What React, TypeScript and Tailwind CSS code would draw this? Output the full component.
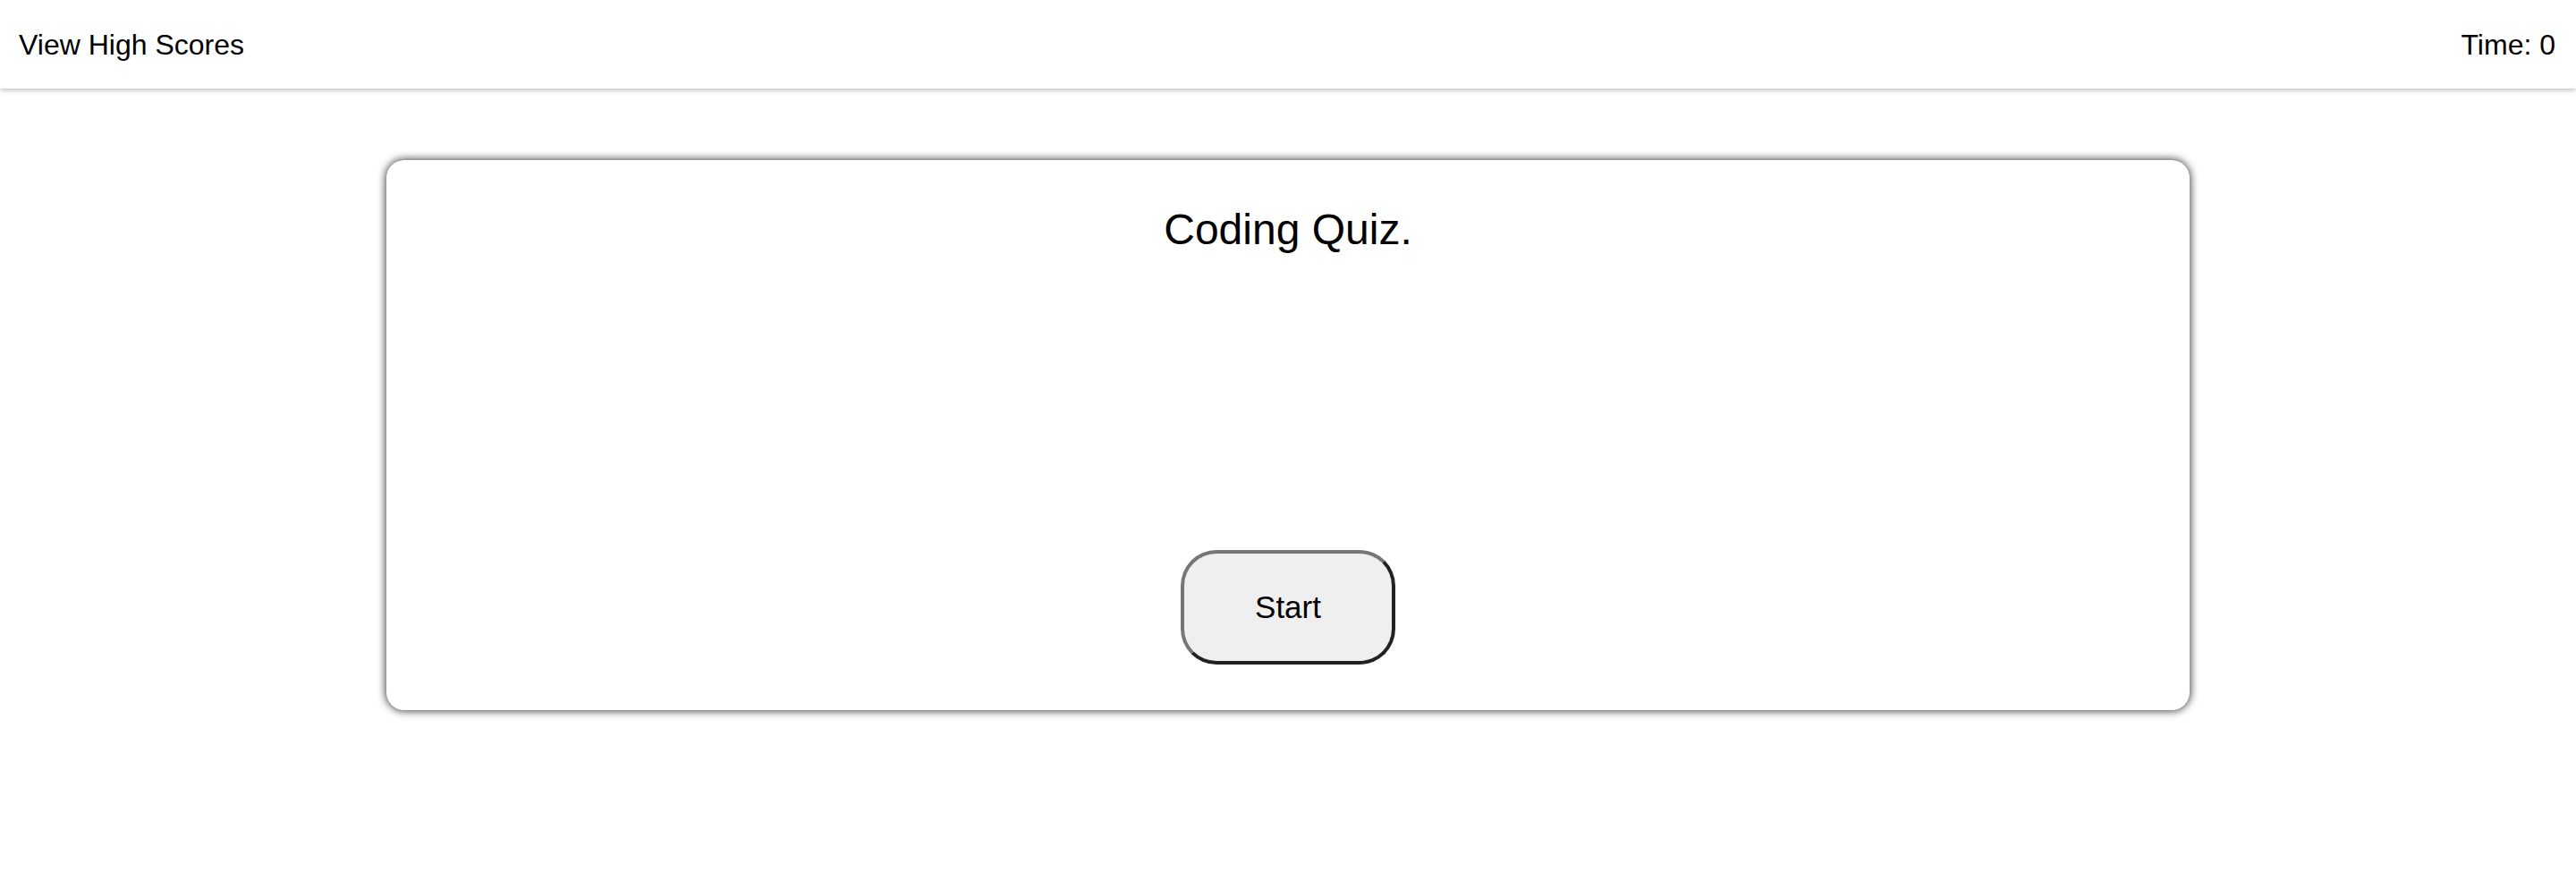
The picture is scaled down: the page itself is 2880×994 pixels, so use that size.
export default function App() {
  const font = "font-['Helvetica_Neue','Liberation_Sans',Arial,sans-serif]";

  return (
    <div className={`min-h-screen bg-white text-black ${font}`}>
      <header className="flex h-[99px] items-center justify-between pl-[21px] pr-[23px] shadow-[0_2px_5px_rgba(0,0,0,0.25)]">
        <span className="text-[32px]">View High Scores</span>
        <span className="text-[32px]">Time: 0</span>
      </header>

      <main className="mt-[80px] flex justify-center">
        <div className="flex h-[615px] w-[70%] flex-col items-center justify-between rounded-[20px] bg-white pt-[50px] pb-[51px] shadow-[0_0_10px_1px_rgba(0,0,0,0.75)]">
          <h1 className="text-[48px] leading-[1.15]">Coding Quiz.</h1>
          <button className="h-[128px] w-[240px] rounded-[40px] border-[4px] border-t-[#767676] border-l-[#767676] border-r-[#222] border-b-[#222] bg-[#efefef] text-[35px]">
            Start
          </button>
        </div>
      </main>
    </div>
  );
}
